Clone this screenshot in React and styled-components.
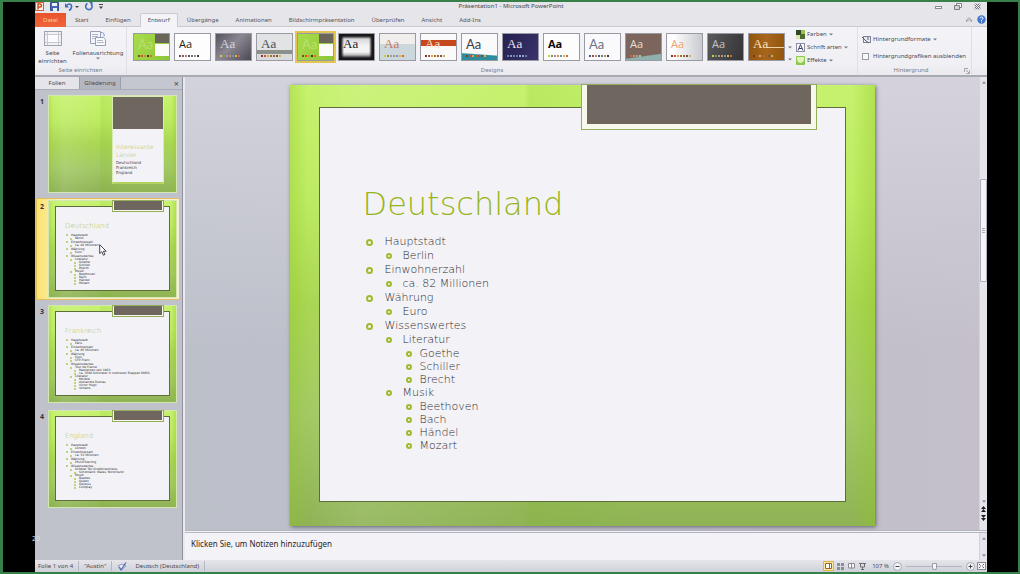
import React, { useState } from 'react';
import styled, { createGlobalStyle, css } from 'styled-components';

const GlobalStyle = createGlobalStyle`
  *, *::before, *::after {
    box-sizing: border-box;
  }
  html, body, #root {
    height: 100%;
    margin: 0;
  }
  body {
    background: #000;
    color: #4a4a52;
    font-family: "Noto Sans", "Open Sans", sans-serif;
    font-size: 6px;
    line-height: 9px;
  }
  button, input, textarea {
    font: inherit;
    color: inherit;
    margin: 0;
  }
  button {
    background: none;
    border: 0;
    padding: 0;
    white-space: nowrap;
  }
  ul, ol {
    list-style: none;
    margin: 0;
    padding: 0;
  }
`;

const Screen = styled.div`
  position: relative;
  height: 100%;
  padding: 0 31px 0 32px;
  border: 2px solid #38804a;
  border-left-width: 3px;
  background: #000;
`;

const Counter = styled.span`
  position: absolute;
  left: 29px;
  bottom: 29px;
  color: #dcdce2;
  font-size: 7px;
`;

const Window = styled.div`
  display: flex;
  flex-direction: column;
  height: 100%;
  background: #e6e5ea;
`;

/* title bar */

const TitleBar = styled.header`
  display: grid;
  grid-template-columns: 1fr auto 1fr;
  align-items: center;
  height: 11px;
  flex: none;
  padding-bottom: 2px;
`;

const QuickAccess = styled.div`
  display: flex;
  align-items: center;
  gap: 6px;
`;

const Title = styled.h1`
  margin: 0;
  font-size: 6px;
  font-weight: 400;
  color: #45454d;
`;

const WindowButtons = styled.div`
  display: flex;
  justify-content: flex-end;
  align-items: center;
  gap: 12px;
  padding-right: 6px;
`;

const IconButton = styled.button`
  display: flex;
  align-items: center;
  justify-content: center;
`;

/* ribbon */

const TabBar = styled.nav`
  display: flex;
  gap: 1px;
  flex: none;
  height: 14px;
  border-bottom: 1px solid #c9cad2;
`;

const Tab = styled.button`
  height: 14px;
  padding: 0 8px;
  color: #54545c;
  ${props => props.$file && css`
    width: 31px;
    background: linear-gradient(#e8542c, #f0643a);
    color: #ffc9a8;
  `}
  ${props => props.$active && css`
    background: #f4f3f7;
    border: 1px solid #c9cad2;
    border-bottom: 0;
    padding: 0 7px;
    border-radius: 2px 2px 0 0;
  `}
`;

const TabTools = styled.div`
  display: flex;
  align-items: center;
  gap: 5px;
  margin-left: auto;
  padding-right: 1px;
`;

const Ribbon = styled.div`
  display: flex;
  flex: none;
  height: 50px;
  padding-right: 15px;
  background: linear-gradient(#f4f3f7, #f0eff4 80%, #e9e9ee);
  border-bottom: 2px solid #a9abb4;
`;

const Group = styled.section`
  display: flex;
  flex-direction: column;
  flex: ${props => props.$grow ? '1 1 0' : 'none'};
  min-width: 0;
  border-right: 1px solid #dfdfe6;
`;

const GroupBody = styled.div`
  display: flex;
  flex: 1;
  min-height: 0;
`;

const GroupLabel = styled.div`
  display: flex;
  justify-content: center;
  height: 9px;
  color: #7b7b85;
  text-align: center;
  span {
    flex: 1;
  }
`;

const LargeButton = styled.button`
  display: flex;
  flex-direction: column;
  align-items: center;
  width: ${props => props.$wide ? '56px' : '35px'};
  padding-top: 3px;
  line-height: 8px;
  white-space: normal;
  svg {
    flex: none;
    margin-bottom: 2px;
  }
`;

const Gallery = styled.div`
  display: flex;
  align-items: flex-start;
  padding: 4px 0 0 4px;
`;

const ThemeCell = styled.button`
  width: 41px;
  height: 32px;
  padding: ${props => props.$active ? '0' : '2px'};
  ${props => props.$active && css`
    border: 2px solid #e2c64f;
  `}
`;

const ThemeCard = styled.span`
  position: relative;
  display: flex;
  flex-direction: column;
  justify-content: space-between;
  height: 28px;
  padding: 4px 3px 3px 4px;
  overflow: hidden;
  text-align: left;
  border: 1px solid #9a9aa2;
  background: ${props => props.$bg};
  color: ${props => props.$ink};
  font-family: ${props => props.$font || '"Open Sans", sans-serif'};
  font-weight: ${props => props.$bold ? 700 : 400};
  font-size: ${props => props.$font ? '13px' : '11px'};
  line-height: 12px;
`;

const Swatches = styled.span`
  display: flex;
  gap: 1px;
`;

const Swatch = styled.i`
  width: 2px;
  height: 2px;
  background: ${props => props.$color};
`;

const GalleryScroll = styled.div`
  display: flex;
  flex-direction: column;
  align-items: center;
  justify-content: flex-end;
  gap: 9px;
  width: 6px;
  padding-bottom: 5px;
`;

const SmallButtons = styled.div`
  display: flex;
  flex-direction: column;
  gap: 4px;
  padding: 3px 3px 0 3px;
`;

const SmallButton = styled.button`
  display: flex;
  align-items: center;
  gap: 2px;
  height: 9px;
`;

const Background = styled.div`
  display: flex;
  flex-direction: column;
  gap: 8px;
  padding: 8px 5px 0 4px;
`;

const CheckLabel = styled.label`
  display: flex;
  align-items: center;
  gap: 4px;
  height: 9px;
  white-space: nowrap;
  input {
    appearance: none;
    width: 7px;
    height: 7px;
    border: 1px solid #9b9ba5;
    background: #f8f8fb;
  }
`;

/* work area */

const Work = styled.main`
  display: flex;
  flex: 1;
  min-height: 0;
`;

const Sidebar = styled.aside`
  width: 148px;
  flex: none;
  overflow: hidden;
  background: #bfc2cb;
`;

const PaneTabs = styled.div`
  display: flex;
  height: 13px;
  margin-bottom: 3px;
  background: #c5c7d0;
  border-bottom: 1px solid #a9acb6;
`;

const PaneTab = styled.button`
  width: ${props => props.$active ? '45px' : '41px'};
  background: ${props => props.$active ? '#e4e4ea' : '#b4b6c1'};
  border-right: 1px solid #9c9ea9;
`;

const PaneClose = styled.button`
  margin-left: auto;
  padding-right: 4px;
  font-size: 9px;
`;

const SlideList = styled.ol`
  display: flex;
  flex-direction: column;
  gap: 3px;
  padding: 0 3px 0 1px;
`;

const SlideItem = styled.li`
  position: relative;
  display: flex;
  gap: 3px;
  height: 102px;
  padding: 1px 2px 2px 3px;
  border: 1px solid transparent;
  ${props => props.$active && css`
    background: linear-gradient(90deg, #fbe36a, #f8eebc 14%, #f7efd0);
    border-color: #e3bd62;
  `}
`;

const SlideNumber = styled.span`
  width: 5px;
  padding-top: 2px;
  font-size: 7px;
  font-weight: 700;
  color: #33333b;
`;

const Sheet = styled.article`
  position: relative;
  background:
    linear-gradient(90deg, rgba(140, 196, 30, 0.3), transparent 3%, rgba(255, 255, 255, 0.1) 12%, transparent 40%, rgba(120, 180, 30, 0.15) 41%, transparent 60%, transparent 96%, rgba(140, 196, 30, 0.35)),
    linear-gradient(#c6f26e, #bdeb62 25%, #a9d653 50%, #a2c964 75%, #8fb355);
`;

const Thumb = styled(Sheet)`
  flex: 1;
  height: 98px;
  padding: 5px 6px 6px;
  border: 1px solid #d5e6b6;
`;

const Stage = styled.div`
  display: flex;
  flex-direction: column;
  flex: 1;
  min-width: 0;
  border-left: 2px solid #e9e9ef;
  box-shadow: -1px 0 #8f929d;
`;

const Canvas = styled.div`
  display: flex;
  flex: 1;
  min-height: 0;
`;

const Desk = styled.div`
  display: flex;
  justify-content: center;
  flex: 1;
  min-width: 0;
  padding: 8px 0 4px;
  background: linear-gradient(rgba(220, 218, 228, 0.7), transparent 60%), linear-gradient(90deg, #bcc0c9, #c4bfca);
`;

const MainSheet = styled(Sheet)`
  height: 100%;
  aspect-ratio: 585 / 441;
  padding: 22px 29px 24px;
  box-shadow: 1px 1px 4px rgba(60, 60, 80, 0.7);
`;

const Paper = styled.div`
  height: 100%;
  padding: ${props => props.$mini ? '15px 0 0 9px' : '73px 0 0 43px'};
  overflow: hidden;
  background: #f3f2f6;
  border: 1px solid #5d6e3a;
`;

const Badge = styled.div`
  position: absolute;
  top: 0;
  left: 50%;
  width: 40%;
  height: 10%;
  background: #6f665f;
  border: ${props => props.$mini ? '1px' : '5px'} solid #f6f8ec;
  border-top: 0;
  outline: 1px solid #94ad5a;
`;

const Heading = styled.h2`
  margin: 0 0 ${props => props.$mini ? '2px' : '8px'};
  color: ${props => props.$mini ? '#b4c550' : '#96b51c'};
  font-family: "DejaVu Sans", sans-serif;
  font-weight: 200;
  font-size: ${props => props.$mini ? '7px' : '32px'};
  line-height: ${props => props.$mini ? '9px' : '46px'};
`;

const Points = styled.ul`
  padding-left: ${props => props.$mini ? '4px' : '20px'};
  font-family: "DejaVu Sans", sans-serif;
  font-weight: ${props => props.$mini ? 400 : 200};
  color: #2a2a2e;
`;

const Outline = styled(Points)`
  padding-left: ${props => props.$mini ? '1px' : '3px'};
`;

const gaps = { 1: '12px', 2: '11px', 3: '8px' };

const Point = styled.span`
  display: flex;
  align-items: center;
  gap: ${props => props.$mini ? '3px' : gaps[props.$level]};
  font-size: ${props => props.$mini ? '3px' : '11px'};
  line-height: ${props => props.$mini ? (props.$level > 1 ? '3px' : '4px') : props.$level > 2 ? '13px' : '14px'};
  white-space: nowrap;
  &::before {
    content: '';
    width: ${props => props.$mini ? '1px' : props.$level > 1 ? '6px' : '7px'};
    height: ${props => props.$mini ? '1px' : props.$level > 1 ? '6px' : '7px'};
    border: ${props => props.$mini ? '1px' : '2px'} solid #9dbb2c;
    border-radius: 50%;
  }
`;

const CoverPanel = styled.div`
  position: absolute;
  top: 0;
  right: 12px;
  width: 52px;
  height: 88px;
  overflow: hidden;
  background: #f3f2f6;
  border: 1px solid #d9ecb0;
  border-bottom: 2px solid #b3d35f;
  font-family: "DejaVu Sans", sans-serif;
  font-size: 4px;
  line-height: 5px;
  color: #3e3e44;
  p {
    margin: 0 0 0 3px;
  }
`;

const CoverBlock = styled.div`
  height: 32px;
  margin-bottom: 14px;
  background: #6f665f;
`;

const CoverTitle = styled.h2`
  margin: 0 0 1px 3px;
  color: #aebf3c;
  font-weight: 200;
  font-size: 6px;
  line-height: 8px;
`;

const Pointer = styled.svg`
  position: absolute;
  left: 62px;
  top: 45px;
`;

const ScrollBar = styled.div`
  display: flex;
  flex-direction: column;
  align-items: center;
  width: 8px;
  flex: none;
  padding: 4px 0 9px;
  gap: 3px;
  background: #e6e5ec;
  border-left: 1px solid #d3d3dc;
`;

const Track = styled.div`
  display: flex;
  flex-direction: column;
  flex: 1;
  width: 100%;
  &::before {
    content: '';
    flex: 92;
  }
  &::after {
    content: '';
    flex: 214;
  }
`;

const ScrollThumb = styled.div`
  display: flex;
  align-items: center;
  justify-content: center;
  flex: 101;
  border: 1px solid #aeb0bb;
  border-radius: 1px;
  background: #f5f5f9;
  &::after {
    content: '';
    width: 3px;
    height: 5px;
    background: repeating-linear-gradient(#a9abb5 0 1px, transparent 1px 2px);
  }
`;

const NotesRow = styled.div`
  display: flex;
  flex: none;
  height: 30px;
  border-top: 3px double #b4b6c1;
  background: #f3f2f6;
`;

const Notes = styled.textarea`
  flex: 1;
  min-width: 0;
  padding: 5px 5px 0 6px;
  border: 0;
  outline: 0;
  resize: none;
  background: transparent;
  color: #1f1f28;
  font-size: 8px;
  line-height: 12px;
`;

const NotesScroll = styled(ScrollBar)`
  justify-content: space-between;
  padding: 4px 0 3px;
`;

/* status bar */

const StatusBar = styled.footer`
  display: flex;
  align-items: center;
  flex: none;
  height: 12px;
  padding: 0 1px 0 3px;
  background: linear-gradient(#e6e5eb, #cfd0d9);
  line-height: 10px;
`;

const StatusItem = styled.span`
  display: flex;
  align-items: center;
  gap: 8px;
  padding-right: 5px;
  margin-right: 5px;
  border-right: 1px solid #b4b6c1;
  white-space: nowrap;
`;

const StatusTools = styled.div`
  display: flex;
  align-items: center;
  gap: 1px;
  margin-left: auto;
`;

const ViewButton = styled.button`
  display: flex;
  align-items: center;
  justify-content: center;
  width: 10px;
  height: 10px;
  ${props => props.$active && css`
    width: 11px;
    background: #fbe9a0;
    border: 1px solid #e0b541;
  `}
`;

const Zoom = styled.label`
  display: flex;
  align-items: center;
  gap: 4px;
  margin-left: 4px;
  white-space: nowrap;
`;

const ZoomRange = styled.input`
  appearance: none;
  width: 56px;
  height: 9px;
  background: linear-gradient(#b2b5c0, #b2b5c0) center / 100% 1px no-repeat;
  &::-webkit-slider-thumb {
    appearance: none;
    width: 5px;
    height: 7px;
    border: 1px solid #9b9eaa;
    border-radius: 1px 1px 3px 3px;
    background: #f8f8fb;
  }
`;

const RoundButton = styled.button`
  width: 9px;
  height: 9px;
  border: 1px solid #a6a9b4;
  border-radius: 50%;
  background: #f4f4f8;
  svg {
    display: block;
  }
`;

const Arrow = ({ up }) => (
  <svg width="4" height="3" viewBox="0 0 4 3">
    <path d={up ? 'M0 2.500L2 0.500L4 2.500Z' : 'M0 0.500L2 2.500L4 0.500Z'} fill="#7a7a84" />
  </svg>
);

const DoubleArrow = ({ up }) => (
  <svg width="5" height="6" viewBox="0 0 5 6">
    <path d={up ? 'M0 3L2.5 0L5 3ZM0 6L2.5 3L5 6Z' : 'M0 0L2.5 3L5 0ZM0 3L2.5 6L5 3Z'} fill="#1c1c22" />
  </svg>
);

const SERIF = '"Liberation Serif", serif';
const LATO = '"Lato", sans-serif';
const WARM = ['#7a3b2c', '#c9503a', '#e8a23c', '#8a7a4a', '#b5562e', '#6a5a4a', '#d8b04a'];
const GREEN = ['#7c4a2a', '#e04a2a', '#d88a2a', '#3a3a2a', '#e06a2a', '#c8b83a'];
const COOL = ['#6a7ab0', '#8a9ac0', '#5a8ab0', '#7a6aa8', '#8ab0c8', '#9aa0c8', '#6a80a8'];
const MIXED = ['#4a5a8a', '#b04a4a', '#8aa04a', '#6a4a8a', '#4a8aa0', '#d08a4a', '#3a3a4a'];
const SUNNY = ['#d8c83a', '#7aa03a', '#b08ac0', '#d88a5a', '#5aa0a0', '#e0b04a', '#c86a4a'];

const AUSTIN = 'linear-gradient(#6a665a, #6a665a) 100% 0 / 14px 9px no-repeat, linear-gradient(#fbfbf8, #fbfbf8) 100% 10px / 14px 12px no-repeat, linear-gradient(120deg, #a9dc4a, #8cc63a)';

const themes = [
  { name: 'Austin', bg: AUSTIN, ink: '#b9e070', colors: GREEN, font: LATO },
  { name: 'Larissa', bg: '#fdfdfd', ink: '#1e1e22', colors: MIXED },
  { name: 'Ananke', bg: 'linear-gradient(135deg, #56525e, #8a8792 45%, #4c4854)', ink: '#d6d4dc', colors: SUNNY, font: SERIF },
  { name: 'Apothecary', bg: 'linear-gradient(#e2e3e4 60%, #8b908c 60% 78%, #d9dadb 78%)', ink: '#4c4c52', colors: WARM, font: SERIF },
  { name: 'Austin', bg: AUSTIN, ink: '#b9e070', colors: GREEN, font: LATO, active: true },
  { name: 'Couture', bg: 'linear-gradient(90deg, #18181a 2px, transparent 5px calc(100% - 5px), #18181a calc(100% - 2px)), linear-gradient(#18181a 2px, #d8d8da 5px, #f4f4f4 12px calc(100% - 8px), #b8b8ba calc(100% - 5px), #18181a calc(100% - 2px))', ink: '#242428', colors: [], font: SERIF },
  { name: 'Cronus', bg: 'linear-gradient(#f0efee 38%, #ccd7dc 38%)', ink: '#c47a68', colors: SUNNY, font: SERIF },
  { name: 'Deimos', bg: 'linear-gradient(#fafafa 24%, #c8481e 24% 48%, #fafafa 48%)', ink: '#fbe6dc', colors: WARM, font: SERIF },
  { name: 'Dactylos', bg: 'linear-gradient(4deg, #2f8c9c 22%, #fafafa 26%)', ink: '#3c3c42', colors: WARM, font: LATO },
  { name: 'Ganymed', bg: 'linear-gradient(120deg, #24204e, #39336c)', ink: '#e6e4f4', colors: COOL, font: SERIF },
  { name: 'Essenz', bg: '#fdfdfd', ink: '#08080a', colors: SUNNY, bold: true },
  { name: 'Executive', bg: '#fafafc', ink: '#6c7488', colors: MIXED, font: LATO },
  { name: 'Galathea', bg: 'linear-gradient(172deg, #7c655c 78%, #8fb0ac 82%)', ink: '#eadfd8', colors: ['#d0604a', '#e08a6a', '#8ab0a0', '#b0c0a0'] },
  { name: 'Ganges', bg: 'linear-gradient(90deg, #fdfdfd 20%, #c8cad0)', ink: '#f0a070', colors: WARM },
  { name: 'Haemera', bg: 'linear-gradient(110deg, #5a5a5c, #343436)', ink: '#c4c4c6', colors: SUNNY },
  { name: 'Holz', bg: 'linear-gradient(#efd0a0, #efd0a0) 100% 13px / 18px 1px no-repeat, linear-gradient(90deg, #92560f, #a7661c, #92560f)', ink: '#f6e2c4', colors: WARM, font: SERIF },
];

const tabs = ['Start', 'Einfügen', 'Entwurf', 'Übergänge', 'Animationen', 'Bildschirmpräsentation', 'Überprüfen', 'Ansicht', 'Add-Ins'];

const deutschland = [
  { text: 'Hauptstadt', items: [{ text: 'Berlin' }] },
  { text: 'Einwohnerzahl', items: [{ text: 'ca. 82 Millionen' }] },
  { text: 'Währung', items: [{ text: 'Euro' }] },
  {
    text: 'Wissenswertes',
    items: [
      { text: 'Literatur', items: [{ text: 'Goethe' }, { text: 'Schiller' }, { text: 'Brecht' }] },
      { text: 'Musik', items: [{ text: 'Beethoven' }, { text: 'Bach' }, { text: 'Händel' }, { text: 'Mozart' }] },
    ],
  },
];

const frankreich = [
  { text: 'Hauptstadt', items: [{ text: 'Paris' }] },
  { text: 'Einwohnerzahl', items: [{ text: 'ca. 65 Millionen' }] },
  { text: 'Währung', items: [{ text: 'Euro' }, { text: 'CFP-Franc' }] },
  {
    text: 'Wissenswertes',
    items: [
      { text: 'Tour de France', items: [{ text: 'Radrennen seit 1903' }, { text: 'ca. 3500 Kilometer in mehreren Etappen PARIS' }] },
      { text: 'Literatur', items: [{ text: 'Molière' }, { text: 'Alexandre Dumas' }, { text: 'Victor Hugo' }, { text: 'Voltaire' }] },
    ],
  },
];

const england = [
  { text: 'Hauptstadt', items: [{ text: 'London' }] },
  { text: 'Einwohnerzahl', items: [{ text: 'ca. 53 Millionen' }] },
  { text: 'Währung', items: [{ text: 'Pfund Sterling' }] },
  {
    text: 'Wissenswertes',
    items: [
      { text: 'Größter Teil Großbritanniens', items: [{ text: 'Schottland, Wales, Nordirland' }] },
      { text: 'Musik', items: [{ text: 'Beatles' }, { text: 'Queen' }, { text: 'Genesis' }, { text: 'Coldplay' }] },
    ],
  },
];

const slides = [
  { cover: true },
  { title: 'Deutschland', points: deutschland },
  { title: 'Frankreich', points: frankreich },
  { title: 'England', points: england },
];

const renderPoints = (points, level, mini) =>
  points.map(point => (
    <li key={point.text}>
      <Point $level={level} $mini={mini}>{point.text}</Point>
      {point.items && <Points $mini={mini}>{renderPoints(point.items, level + 1, mini)}</Points>}
    </li>
  ));

const SlideContent = ({ slide, mini }) => (
  <>
    <Paper $mini={mini}>
      <Heading $mini={mini}>{slide.title}</Heading>
      <Outline $mini={mini}>{renderPoints(slide.points, 1, mini)}</Outline>
    </Paper>
    <Badge $mini={mini} />
  </>
);

const Cover = () => (
  <CoverPanel>
    <CoverBlock />
    <CoverTitle>Interessante<br />Länder</CoverTitle>
    <p>Deutschland</p>
    <p>Frankreich</p>
    <p>England</p>
  </CoverPanel>
);

const TopBar = () => (
  <TitleBar>
    <QuickAccess>
      <svg width="9" height="9" viewBox="0 0 9 9">
        <rect x="0.5" y="0.5" width="8" height="8" fill="#fbeee8" stroke="#d4603a" />
        <path d="M3 7.5V2H5a1.4 1.4 0 0 1 0 3H3" fill="none" stroke="#cf4a22" strokeWidth="1.4" />
      </svg>
      <IconButton aria-label="Speichern">
        <svg width="9" height="9" viewBox="0 0 9 9">
          <path d="M0.5 0.5h8v8h-8z" fill="#4668b4" stroke="#35508f" />
          <path d="M2 1h5v3H2zM3 6h4v3H3z" fill="#eef1fa" />
        </svg>
      </IconButton>
      <IconButton aria-label="Rückgängig">
        <svg width="14" height="9" viewBox="0 0 14 9">
          <path d="M1.5 3.5C4 1 7 2 6.5 5C6.2 6.8 5 8 4 8.500" fill="none" stroke="#3f6cc0" strokeWidth="1.6" />
          <path d="M0 1v4.500h4z" fill="#3f6cc0" />
          <path d="M10 4h4l-2 2z" fill="#44444c" />
        </svg>
      </IconButton>
      <IconButton aria-label="Wiederholen">
        <svg width="8" height="9" viewBox="0 0 8 9">
          <path d="M2.500 1.500A3.200 3.200 0 1 0 6 2" fill="none" stroke="#3f6cc0" strokeWidth="1.600" />
          <path d="M4 0h3.500v3.500z" fill="#3f6cc0" />
        </svg>
      </IconButton>
      <svg width="4" height="6" viewBox="0 0 4 6">
        <path d="M0 0.500h4" stroke="#44444c" />
        <path d="M0 2.500h4l-2 2.500z" fill="#44444c" />
      </svg>
    </QuickAccess>
    <Title>Präsentation1 - Microsoft PowerPoint</Title>
    <WindowButtons>
      <IconButton aria-label="Minimieren">
        <svg width="7" height="7" viewBox="0 0 7 7">
          <rect x="0.5" y="3.500" width="6" height="2" fill="#fff" stroke="#8b8b95" />
        </svg>
      </IconButton>
      <IconButton aria-label="Verkleinern">
        <svg width="8" height="7" viewBox="0 0 8 7">
          <path d="M2.500 0.500h5v4h-5z" fill="#fff" stroke="#7e7e88" />
          <path d="M0.500 2.500h5v4h-5z" fill="#d4d4dc" stroke="#7e7e88" />
        </svg>
      </IconButton>
      <IconButton aria-label="Schließen">
        <svg width="7" height="7" viewBox="0 0 7 7">
          <path d="M1 1l5 5M6 1l-5 5" stroke="#75757f" strokeWidth="2.400" />
          <path d="M1 1l5 5M6 1l-5 5" stroke="#f6f6f9" strokeWidth="1" />
        </svg>
      </IconButton>
    </WindowButtons>
  </TitleBar>
);

const DesignRibbon = () => {
  const [hidden, setHidden] = useState(false);
  return (
    <Ribbon>
      <Group>
        <GroupBody>
          <LargeButton>
            <svg width="18" height="17" viewBox="0 0 18 17">
              <rect x="0.5" y="1.500" width="17" height="14" fill="#f1f1f6" stroke="#a0a3b0" />
              <path d="M3.500 2v13M14.500 2v13M1 4.500h16M1 12.500h16" stroke="#c6c8d2" />
              <path d="M4 5h10v7H4z" fill="#fbfbfd" />
            </svg>
            Seite einrichten
          </LargeButton>
          <LargeButton $wide>
            <svg width="18" height="17" viewBox="0 0 18 17">
              <path d="M1.500 1.500h10v12h-10z" fill="#f4f5fa" stroke="#98a0ba" />
              <path d="M3 4.500h6M3 6.500h6M3 8.500h3" stroke="#b0b8d0" />
              <path d="M6.500 7.500h8l2 2v6h-10z" fill="#fbfbfd" stroke="#98a0ba" />
              <path d="M8 10.500h6M8 12.500h7" stroke="#b0b8d0" />
              <path d="M12 2.500q4 0 3 4" fill="none" stroke="#8098c8" />
            </svg>
            Folienausrichtung
            <Arrow />
          </LargeButton>
        </GroupBody>
        <GroupLabel><span>Seite einrichten</span></GroupLabel>
      </Group>
      <Group $grow>
        <GroupBody>
          <Gallery>
            {themes.map((theme, i) => (
              <ThemeCell key={i} $active={theme.active} aria-label={theme.name}>
                <ThemeCard $bg={theme.bg} $ink={theme.ink} $font={theme.font} $bold={theme.bold}>
                  Aa
                  <Swatches>
                    {theme.colors.map(color => <Swatch key={color} $color={color} />)}
                  </Swatches>
                </ThemeCard>
              </ThemeCell>
            ))}
          </Gallery>
          <GalleryScroll>
            <Arrow />
            <Arrow />
          </GalleryScroll>
          <SmallButtons>
            <SmallButton>
              <svg width="9" height="9" viewBox="0 0 9 9">
                <path d="M0 0h5v5H0z" fill="#2f4a22" />
                <path d="M5 0h4v4H5z" fill="#9cc050" />
                <path d="M0 5h4v4H0z" fill="#d8e8b0" />
                <path d="M4 4h5v5H4z" fill="#4c6c30" />
              </svg>
              Farben <Arrow />
            </SmallButton>
            <SmallButton>
              <svg width="9" height="9" viewBox="0 0 9 9">
                <rect x="0.500" y="0.500" width="8" height="8" fill="#fbfbfd" stroke="#8c8fa4" />
                <path d="M2 7.500L4.500 1.500L7 7.500M3 5.500h3" fill="none" stroke="#3c4468" />
              </svg>
              Schrift arten <Arrow />
            </SmallButton>
            <SmallButton>
              <svg width="9" height="9" viewBox="0 0 9 9">
                <rect width="9" height="9" rx="1" fill="#8cc850" />
                <path d="M1 1h7v3q-1 3 -3.500 3t-3.500 -3z" fill="#dff3b8" />
              </svg>
              Effekte <Arrow />
            </SmallButton>
          </SmallButtons>
        </GroupBody>
        <GroupLabel><span>Designs</span></GroupLabel>
      </Group>
      <Group>
        <GroupBody>
          <Background>
            <SmallButton>
              <svg width="9" height="8" viewBox="0 0 9 8">
                <rect x="1.500" y="0.500" width="7" height="6" fill="#e8eaf2" stroke="#80849a" />
                <path d="M0 1l4 4M4 5l3 2M6 1v3" stroke="#5c6074" />
              </svg>
              Hintergrundformate <Arrow />
            </SmallButton>
            <CheckLabel>
              <input type="checkbox" checked={hidden} onChange={e => setHidden(e.target.checked)} />
              Hintergrundgrafiken ausblenden
            </CheckLabel>
          </Background>
        </GroupBody>
        <GroupLabel>
          <span>Hintergrund</span>
          <IconButton aria-label="Hintergrund formatieren">
            <svg width="7" height="6" viewBox="0 0 7 6">
              <path d="M0.500 4V0.500H4M2 2l3 3M5.500 2.500v3H2.500" fill="none" stroke="#a4a4ae" />
            </svg>
          </IconButton>
        </GroupLabel>
      </Group>
    </Ribbon>
  );
};

const App = () => {
  const [notes, setNotes] = useState('Klicken Sie, um Notizen hinzuzufügen');
  const [zoom, setZoom] = useState(50);

  return (
    <Screen>
      <GlobalStyle />
      <Window>
        <TopBar />
        <TabBar>
          <Tab $file>Datei</Tab>
          {tabs.map(tab => <Tab key={tab} $active={tab === 'Entwurf'}>{tab}</Tab>)}
          <TabTools>
            <IconButton aria-label="Menüband minimieren">
              <svg width="6" height="5" viewBox="0 0 6 5">
                <path d="M0.500 4.500V3L3 0.800L5.500 3V4.500L3 2.500Z" fill="#fff" stroke="#85858f" strokeWidth="0.800" />
              </svg>
            </IconButton>
            <IconButton aria-label="Hilfe">
              <svg width="9" height="9" viewBox="0 0 9 9">
                <circle cx="4.500" cy="4.500" r="4.200" fill="#3f74c8" />
                <path d="M3 3.400q0 -1.400 1.500 -1.400t1.500 1.300q0 0.900 -1.500 1.700v0.800M4.500 6.500v1" fill="none" stroke="#fff" />
              </svg>
            </IconButton>
          </TabTools>
        </TabBar>
        <DesignRibbon />
        <Work>
          <Sidebar>
            <PaneTabs>
              <PaneTab $active>Folien</PaneTab>
              <PaneTab>Gliederung</PaneTab>
              <PaneClose aria-label="Bereich schließen">×</PaneClose>
            </PaneTabs>
            <SlideList>
              {slides.map((slide, i) => (
                <SlideItem key={i} $active={i === 1}>
                  <SlideNumber>{i + 1}</SlideNumber>
                  <Thumb>
                    {slide.cover ? <Cover /> : <SlideContent slide={slide} mini />}
                  </Thumb>
                  {i === 1 && (
                    <Pointer width="8" height="12" viewBox="0 0 8 12">
                      <path d="M0.700 0.700V9.500L2.800 7.700L4.300 11.200L5.900 10.500L4.400 7.200H7.200Z" fill="#fff" stroke="#33333b" strokeWidth="0.900" />
                    </Pointer>
                  )}
                </SlideItem>
              ))}
            </SlideList>
          </Sidebar>
          <Stage>
            <Canvas>
              <Desk>
                <MainSheet>
                  <SlideContent slide={slides[1]} />
                </MainSheet>
              </Desk>
              <ScrollBar>
                <Arrow up />
                <Track><ScrollThumb /></Track>
                <Arrow />
                <DoubleArrow up />
                <DoubleArrow />
              </ScrollBar>
            </Canvas>
            <NotesRow>
              <Notes aria-label="Notizen" value={notes} onChange={e => setNotes(e.target.value)} />
              <NotesScroll>
                <Arrow up />
                <Arrow />
              </NotesScroll>
            </NotesRow>
          </Stage>
        </Work>
        <StatusBar>
          <StatusItem>Folie 1 von 4</StatusItem>
          <StatusItem>"Austin"</StatusItem>
          <StatusItem>
            <svg width="10" height="9" viewBox="0 0 10 9">
              <path d="M1 4l4 -2l4 2l-4 3.500z" fill="#e9ecf6" stroke="#8c98c0" />
              <path d="M2 5l2 3L9 0.500" fill="none" stroke="#4f6ab0" strokeWidth="1.200" />
            </svg>
            Deutsch (Deutschland)
          </StatusItem>
          <StatusTools>
            <ViewButton $active aria-label="Normal">
              <svg width="7" height="6" viewBox="0 0 7 6">
                <path d="M0.500 0.500h6v5h-6zM4.500 0.500v5" fill="#fff" stroke="#a0622c" />
              </svg>
            </ViewButton>
            <ViewButton aria-label="Foliensortierung">
              <svg width="7" height="7" viewBox="0 0 7 7">
                <path d="M0 0h3v3H0zM4 0h3v3H4zM0 4h3v3H0zM4 4h3v3H4z" fill="#8c8c96" />
              </svg>
            </ViewButton>
            <ViewButton aria-label="Leseansicht">
              <svg width="7" height="6" viewBox="0 0 7 6">
                <path d="M0.500 0.500h6v4.500h-6zM3.500 0.500v5" fill="#f6f6f9" stroke="#8c8c96" />
              </svg>
            </ViewButton>
            <ViewButton aria-label="Bildschirmpräsentation">
              <svg width="7" height="7" viewBox="0 0 7 7">
                <path d="M0 0.500h7M1.500 1v3h4V1M3.500 4v2.500M2 6.500h3" fill="none" stroke="#6c6c76" />
              </svg>
            </ViewButton>
            <Zoom>
              107 %
              <RoundButton as="span">
                <svg width="7" height="7" viewBox="0 0 7 7"><path d="M1.500 3.500h4" stroke="#44444c" /></svg>
              </RoundButton>
              <ZoomRange type="range" aria-label="Zoom" value={zoom} onChange={e => setZoom(Number(e.target.value))} />
              <RoundButton aria-label="Vergrößern">
                <svg width="7" height="7" viewBox="0 0 7 7"><path d="M1.500 3.500h4M3.500 1.500v4" stroke="#44444c" /></svg>
              </RoundButton>
            </Zoom>
            <ViewButton aria-label="An Fenster anpassen">
              <svg width="9" height="8" viewBox="0 0 9 8">
                <rect x="0.500" y="0.500" width="8" height="7" fill="#f4f4f8" stroke="#8c8c96" />
                <path d="M2 2l1.500 1.500M7 2L5.500 3.500M2 6l1.500 -1.500M7 6L5.500 4.500" stroke="#5c5c66" />
              </svg>
            </ViewButton>
          </StatusTools>
        </StatusBar>
      </Window>
      <Counter>20</Counter>
    </Screen>
  );
};

export default App;
